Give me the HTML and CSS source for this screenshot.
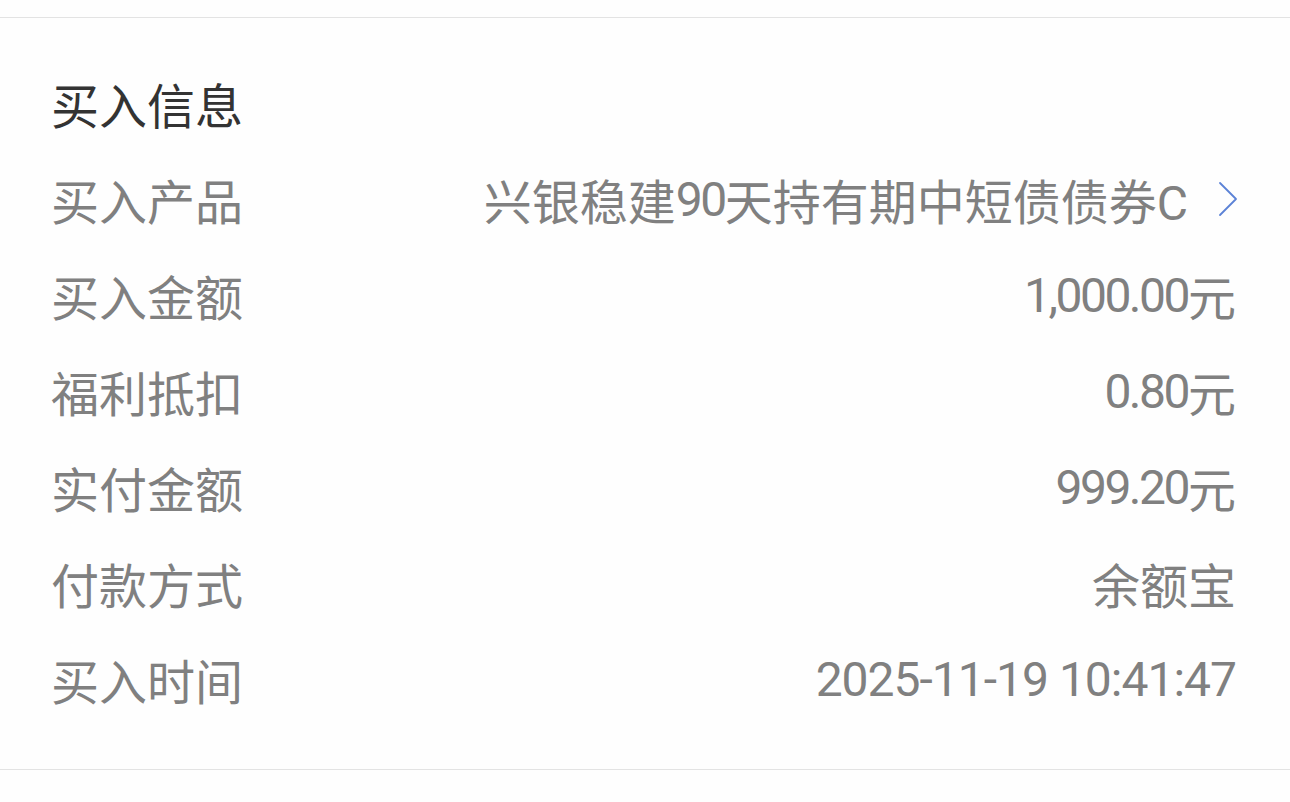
FILE: index.html
```html
<!DOCTYPE html>
<html lang="zh-CN">
<head>
<meta charset="utf-8">
<link rel="stylesheet" href="styles.css">
</head>
<body>
<div class="page">
  <div class="rule"></div>
  <section class="info">
    <div class="title">买入信息</div>
    <div class="row">
      <span class="label">买入产品</span>
      <span class="value">兴银稳建<span class="num">90</span>天持有期中短债债券C<svg class="chev" width="20" height="36" viewBox="0 0 20 36"><path d="M2 2 L18 18 L2 34" fill="none" stroke="#5b82d6" stroke-width="1.8" stroke-linecap="round" stroke-linejoin="round"/></svg></span>
    </div>
    <div class="row">
      <span class="label">买入金额</span>
      <span class="value"><span class="num">1,000.00</span>元</span>
    </div>
    <div class="row">
      <span class="label">福利抵扣</span>
      <span class="value"><span class="num">0.80</span>元</span>
    </div>
    <div class="row">
      <span class="label">实付金额</span>
      <span class="value"><span class="num">999.20</span>元</span>
    </div>
    <div class="row">
      <span class="label">付款方式</span>
      <span class="value">余额宝</span>
    </div>
    <div class="row">
      <span class="label">买入时间</span>
      <span class="value time">2025-11-19 10:41:47</span>
    </div>
  </section>
  <div class="rule"></div>
</div>
</body>
</html>
```

FILE: styles.css
```css
html, body {
  margin: 0;
  padding: 0;
  background: #fefefe;
}
.page {
  padding-top: 17px;
  font-family: Roboto, "Noto Sans CJK SC", sans-serif;
}
.rule {
  height: 1px;
  background: #e3e3e3;
}
.info {
  padding: 37px 54px 42px 51px;
}
.title {
  height: 96px;
  line-height: 96px;
  font-size: 48px;
  color: #333333;
  font-family: "Noto Sans CJK SC", sans-serif;
}
.row {
  height: 96px;
  display: flex;
  align-items: center;
  justify-content: space-between;
  font-size: 48px;
  color: #808080;
}
.label {
  font-family: "Noto Sans CJK SC", sans-serif;
}
.value {
  display: flex;
  align-items: center;
  white-space: pre;
}
.num {
  letter-spacing: -2.5px;
}
.time {
  letter-spacing: -1px;
}
.chev {
  margin-left: 30px;
  margin-right: -2px;
}
```
